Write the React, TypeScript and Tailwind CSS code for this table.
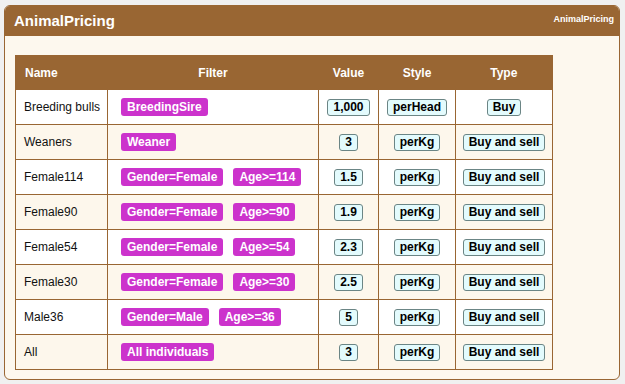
import React from 'react';

interface PricingRow {
  name: string;
  filters: string[];
  value: string;
  style: string;
  type: string;
}

const rows: PricingRow[] = [
  { name: 'Breeding bulls', filters: ['BreedingSire'], value: '1,000', style: 'perHead', type: 'Buy' },
  { name: 'Weaners', filters: ['Weaner'], value: '3', style: 'perKg', type: 'Buy and sell' },
  { name: 'Female114', filters: ['Gender=Female', 'Age>=114'], value: '1.5', style: 'perKg', type: 'Buy and sell' },
  { name: 'Female90', filters: ['Gender=Female', 'Age>=90'], value: '1.9', style: 'perKg', type: 'Buy and sell' },
  { name: 'Female54', filters: ['Gender=Female', 'Age>=54'], value: '2.3', style: 'perKg', type: 'Buy and sell' },
  { name: 'Female30', filters: ['Gender=Female', 'Age>=30'], value: '2.5', style: 'perKg', type: 'Buy and sell' },
  { name: 'Male36', filters: ['Gender=Male', 'Age>=36'], value: '5', style: 'perKg', type: 'Buy and sell' },
  { name: 'All', filters: ['All individuals'], value: '3', style: 'perKg', type: 'Buy and sell' },
];

const Chip: React.FC<{ text: string }> = ({ text }) => (
  <span className="inline-block h-[17px] px-[5px] leading-[15px] rounded-[3px] border border-[#6b8585] bg-[#e3fbfd] font-bold text-black">
    {text}
  </span>
);

const Tag: React.FC<{ text: string }> = ({ text }) => (
  <span className="inline-block h-[18px] px-[6px] leading-[18px] rounded-[3px] bg-[#cc33cc] font-bold text-white">
    {text}
  </span>
);

export default function App() {
  return (
    <div
      className="w-[625px] h-[384px] bg-[#f0f0f0] pt-[5px] pl-[4px] text-[12px]"
      style={{ fontFamily: '"Liberation Sans", Arial, sans-serif' }}
    >
      <div className="w-[616px] h-[375px] rounded-[6px] border border-[#996633] bg-[#fdf8ee] overflow-hidden">
        {/* Header bar */}
        <div className="h-[30px] bg-[#996633] flex items-start justify-between pl-[9px] pr-[5px]">
          <span className="text-white font-bold text-[15px] leading-[30px]">AnimalPricing</span>
          <span className="text-white font-bold text-[9px] mt-[7px]">AnimalPricing</span>
        </div>

        <div className="pt-[19px] pl-[10px]">
          <table className="border-collapse border border-[#996633] text-[#111]">
            <thead>
              <tr className="h-[34px] bg-[#996633] text-white font-bold">
                <th className="w-[92px] text-left pl-[9px] font-bold">Name</th>
                <th className="w-[211px] text-center font-bold">Filter</th>
                <th className="w-[60px] text-center font-bold">Value</th>
                <th className="w-[77px] text-center font-bold">Style</th>
                <th className="w-[97px] text-center font-bold">Type</th>
              </tr>
            </thead>
            <tbody>
              {rows.map((r, i) => (
                <tr key={r.name} className={`h-[35px] ${i % 2 === 0 ? 'bg-white' : 'bg-[#fdf7ec]'}`}>
                  <td className="border border-[#996633] pl-[8px]">{r.name}</td>
                  <td className="border border-[#996633] pl-[13px]">
                    <div className="flex gap-[10px]">
                      {r.filters.map((f) => (
                        <Tag key={f} text={f} />
                      ))}
                    </div>
                  </td>
                  <td className="border border-[#996633] text-center">
                    <Chip text={r.value} />
                  </td>
                  <td className="border border-[#996633] text-center">
                    <Chip text={r.style} />
                  </td>
                  <td className="border border-[#996633] text-center">
                    <Chip text={r.type} />
                  </td>
                </tr>
              ))}
            </tbody>
          </table>
        </div>
      </div>
    </div>
  );
}
